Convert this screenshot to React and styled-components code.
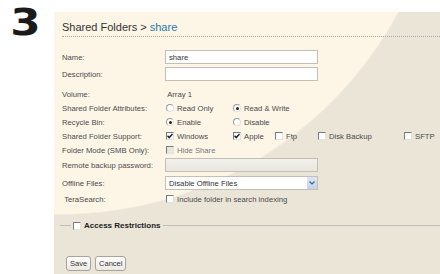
import React from "react";
import styled, { createGlobalStyle } from "styled-components";

const GlobalStyle = createGlobalStyle`
  html, body {
    margin: 0;
    padding: 0;
    background: #ffffff;
  }
  body {
    font-family: "Liberation Sans", Arial, sans-serif;
  }
`;

const Page = styled.div`
  display: flex;
  width: 440px;
  height: 274px;
  overflow: hidden;
`;

const StepColumn = styled.div`
  width: 54px;
  flex: none;
`;

const StepNumber = styled.div`
  font-family: "DejaVu Sans", sans-serif;
  font-weight: bold;
  font-size: 38px;
  line-height: normal;
  color: #1a1a1a;
  padding-left: 9px;
  transform: scaleX(1.15);
  transform-origin: left center;
`;

const Panel = styled.div`
  flex: 1;
  margin-top: 12px;
  padding: 0 0 0 8px;
  background: radial-gradient(
    circle 385px at 6px -182px,
    #fdf6e7 99.6%,
    #ebe5d8 100%
  );
  color: #4a4a4a;
`;

const Title = styled.div`
  font-family: "Liberation Sans", Arial, sans-serif;
  font-size: 11px;
  line-height: 13px;
  padding-top: 9px;
  color: #333333;

  span {
    color: #2a78a8;
  }
`;

const Divider = styled.div`
  margin-top: 2px;
  border-top: 1px dotted #a9a6a0;
`;

const Form = styled.div`
  display: grid;
  grid-template-columns: 103px 1fr;
  margin-top: 13px;
  font-size: 7.7px;
`;

const Label = styled.div`
  display: flex;
  align-items: center;
  height: 14px;
  margin-top: ${(p) => p.$mt || 0}px;
  white-space: nowrap;
`;

const Field = styled.div`
  display: flex;
  align-items: center;
  height: 14px;
  margin-top: ${(p) => p.$mt || 0}px;
  white-space: nowrap;
`;

const TextBox = styled.div`
  box-sizing: border-box;
  width: 153px;
  height: 14px;
  border: 1px solid #c3bfb6;
  background: ${(p) =>
    p.$disabled ? "linear-gradient(#f3f1ec, #e9e6df)" : "#ffffff"};
  padding: 0 3px;
  display: flex;
  align-items: center;
  color: #333;
`;

const Select = styled(TextBox)`
  justify-content: space-between;
  padding-right: 0;
`;

const SelectArrow = styled.div`
  width: 10px;
  height: 12px;
  background: linear-gradient(#dde6f3, #c4d3ea);
  display: flex;
  align-items: center;
  justify-content: center;
`;

const Options = styled.div`
  display: grid;
  grid-template-columns: ${(p) => p.$cols};
  align-items: center;
  padding-left: 1px;
`;

const Option = styled.label`
  display: flex;
  align-items: center;
  gap: 3px;
  color: ${(p) => (p.$disabled ? "#777" : "#4a4a4a")};
`;

const Radio = styled.span`
  box-sizing: border-box;
  width: 8px;
  height: 8px;
  border-radius: 50%;
  border: 1px solid #9a9a9a;
  border-right-color: #e0e0e0;
  border-bottom-color: #e0e0e0;
  background: #ffffff;
  display: flex;
  align-items: center;
  justify-content: center;

  &::after {
    content: "";
    width: 3px;
    height: 3px;
    border-radius: 50%;
    background: ${(p) => (p.$on ? "#222" : "transparent")};
  }
`;

const Check = styled.span`
  box-sizing: border-box;
  width: 8px;
  height: 8px;
  border: 1px solid #7a7a7a;
  border-right-color: #e2e2e2;
  border-bottom-color: #e2e2e2;
  background: ${(p) => (p.$disabled ? "#e9e6df" : "#ffffff")};
  display: flex;
  align-items: center;
  justify-content: center;
`;

const Tick = () => (
  <svg width="6" height="6" viewBox="0 0 6 6">
    <path d="M0.5 2.8 L2.2 4.6 L5.5 1" stroke="#222" strokeWidth="1.5" fill="none" />
  </svg>
);

const Fieldset = styled.div`
  display: flex;
  align-items: center;
  margin-top: 15px;
  margin-left: -2px;
`;

const Line = styled.div`
  height: 1px;
  background: #c2bdb3;
  flex: ${(p) => (p.$grow ? 1 : "none")};
  width: ${(p) => (p.$grow ? "auto" : "11px")};
`;

const Legend = styled.div`
  display: flex;
  align-items: center;
  gap: 3px;
  padding: 0 3px 0 2px;
  font-size: 8px;
  font-weight: bold;
  color: #222;
`;

const Buttons = styled.div`
  display: flex;
  gap: 4px;
  margin-top: 26px;
  padding-left: 4px;
`;

const Button = styled.button`
  font-family: "Liberation Sans", Arial, sans-serif;
  font-size: 7.5px;
  height: 15px;
  padding: 0 3px;
  border: 1px solid #a8a49c;
  border-radius: 3px;
  background: linear-gradient(#ffffff, #ece9e2);
  color: #333;
`;

export default function App() {
  return (
    <Page>
      <GlobalStyle />
      <StepColumn>
        <StepNumber>3</StepNumber>
      </StepColumn>
      <Panel>
        <Title>
          Shared Folders &gt; <span>share</span>
        </Title>
        <Divider />
        <Form>
          <Label>Name:</Label>
          <Field>
            <TextBox>share</TextBox>
          </Field>

          <Label $mt={3}>Description:</Label>
          <Field $mt={3}>
            <TextBox />
          </Field>

          <Label $mt={6}>Volume:</Label>
          <Field $mt={6}>&nbsp;Array 1</Field>

          <Label>Shared Folder Attributes:</Label>
          <Field>
            <Options $cols="67px auto">
              <Option>
                <Radio /> Read Only
              </Option>
              <Option>
                <Radio $on /> Read &amp; Write
              </Option>
            </Options>
          </Field>

          <Label>Recycle Bin:</Label>
          <Field>
            <Options $cols="67px auto">
              <Option>
                <Radio $on /> Enable
              </Option>
              <Option>
                <Radio /> Disable
              </Option>
            </Options>
          </Field>

          <Label>Shared Folder Support:</Label>
          <Field>
            <Options $cols="67px 42px 43px 86px auto">
              <Option>
                <Check>
                  <Tick />
                </Check>
                Windows
              </Option>
              <Option>
                <Check>
                  <Tick />
                </Check>
                Apple
              </Option>
              <Option>
                <Check /> Ftp
              </Option>
              <Option>
                <Check /> Disk Backup
              </Option>
              <Option>
                <Check /> SFTP
              </Option>
            </Options>
          </Field>

          <Label>Folder Mode (SMB Only):</Label>
          <Field>
            <Options $cols="auto">
              <Option $disabled>
                <Check $disabled /> Hide Share
              </Option>
            </Options>
          </Field>

          <Label $mt={1}>Remote backup password:</Label>
          <Field $mt={1}>
            <TextBox $disabled />
          </Field>

          <Label $mt={4}>Offline Files:</Label>
          <Field $mt={4}>
            <Select>
              Disable Offline Files
              <SelectArrow>
                <svg width="6" height="4" viewBox="0 0 6 4">
                  <path d="M0.5 0.5 L3 3 L5.5 0.5" stroke="#4a5f86" strokeWidth="1.2" fill="none" />
                </svg>
              </SelectArrow>
            </Select>
          </Field>

          <Label $mt={2}>&nbsp;TeraSearch:</Label>
          <Field $mt={2}>
            <Options $cols="auto">
              <Option>
                <Check /> Include folder in search indexing
              </Option>
            </Options>
          </Field>
        </Form>

        <Fieldset>
          <Line />
          <Legend>
            <Check /> Access Restrictions
          </Legend>
          <Line $grow />
        </Fieldset>

        <Buttons>
          <Button>Save</Button>
          <Button>Cancel</Button>
        </Buttons>
      </Panel>
    </Page>
  );
}
